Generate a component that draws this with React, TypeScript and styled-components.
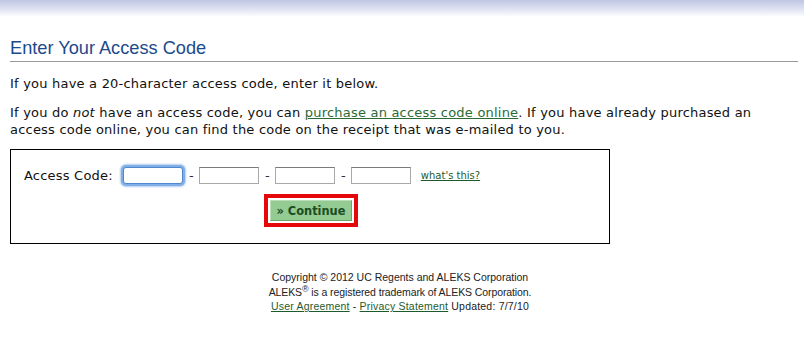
import React from "react";
import styled, { createGlobalStyle } from "styled-components";

const Global = createGlobalStyle`
  html, body { margin: 0; padding: 0; background: #fff; }
  body { font-family: "DejaVu Sans", Verdana, sans-serif; color: #111; }
`;

const TopBand = styled.div`
  height: 17px;
  background: linear-gradient(to bottom, #c0c6e2 0%, #dadef0 45%, #ffffff 100%);
`;

const Main = styled.main`
  padding: 0 6px 0 10px;
`;

const Title = styled.h1`
  margin: 20px 0 0;
  font-family: "Liberation Sans", Arial, sans-serif;
  font-weight: normal;
  font-size: 18.2px;
  line-height: 22px;
  color: #1b4a8c;
  padding-bottom: 2px;
  border-bottom: 1px solid #9a9a9a;
`;

const Para = styled.p<{ $top: number }>`
  margin: ${(p) => p.$top}px 0 0;
  font-size: 13px;
  line-height: 17px;
  letter-spacing: 0.21px;
`;

const TextLink = styled.a`
  color: #2b6b37;
  text-decoration: underline;
`;

const Box = styled.section`
  margin-top: 11px;
  width: 600px;
  box-sizing: border-box;
  border: 1px solid #000;
  padding: 15px 0 16px 13px;
  display: flex;
  flex-direction: column;
  gap: 9px;
`;

const CodeRow = styled.div`
  display: flex;
  align-items: center;
  height: 20px;
  font-size: 13px;
  letter-spacing: 0.21px;
`;

const Label = styled.label`
  margin-right: 10px;
`;

const CodeInput = styled.input<{ $focused?: boolean }>`
  width: 60px;
  height: 17px;
  box-sizing: border-box;
  border: 1px solid ${(p) => (p.$focused ? "#4f86cc" : "#a9a9a9")};
  border-top-color: ${(p) => (p.$focused ? "#4f86cc" : "#7a7a7a")};
  background: #fff;
  padding: 0;
  outline: none;
  box-shadow: ${(p) => (p.$focused ? "0 0 0 2px #80aee6, 0 0 2px 3px #b3cdef" : "none")};
  border-radius: ${(p) => (p.$focused ? "3px" : "0")};
`;

const Dash = styled.span`
  width: 5px;
  margin: 0 5px 0 6px;
  text-align: center;
  color: #333;
`;

const SmallLink = styled.a`
  margin-left: 10px;
  font-size: 10px;
  letter-spacing: 0;
  color: #1e5b2c;
  text-decoration: underline;
`;

const ButtonRow = styled.div`
  display: flex;
  justify-content: center;
  padding-right: 11px;
`;

const Highlight = styled.div`
  border: 4px solid #e4080a;
  padding: 2px;
  background: #fff;
`;

const ContinueButton = styled.button`
  width: 82px;
  height: 21px;
  box-sizing: border-box;
  background: #93cb93;
  border: 1px solid #6fa66f;
  border-top-color: #b9ddb9;
  border-left-color: #b9ddb9;
  color: #1b4d22;
  font-family: "DejaVu Sans", Verdana, sans-serif;
  font-weight: bold;
  font-size: 11.4px;
  padding: 0;
  display: block;
`;

const Footer = styled.footer`
  margin-top: 26px;
  text-align: center;
  font-family: "Liberation Sans", Arial, sans-serif;
  font-size: 10.5px;
  line-height: 14.5px;
  color: #222;
  padding-right: 8px;
`;

const FooterLine = styled.div<{ $spacing?: number }>`
  letter-spacing: ${(p) => p.$spacing ?? 0}px;
`;

const FooterLink = styled.a`
  color: #1e5b2c;
  text-decoration: underline;
`;

const Reg = styled.sup`
  font-size: 9px;
  line-height: 0;
`;

export default function App() {
  return (
    <>
      <Global />
      <TopBand />
      <Main>
        <Title>Enter Your Access Code</Title>
        <Para $top={13}>If you have a 20-character access code, enter it below.</Para>
        <Para $top={12}>
          If you do <em>not</em> have an access code, you can{" "}
          <TextLink href="#">purchase an access code online</TextLink>. If you have already purchased an
          <br />
          access code online, you can find the code on the receipt that was e-mailed to you.
        </Para>
        <Box>
          <CodeRow>
            <Label>Access Code:</Label>
            <CodeInput $focused />
            <Dash>-</Dash>
            <CodeInput />
            <Dash>-</Dash>
            <CodeInput />
            <Dash>-</Dash>
            <CodeInput />
            <SmallLink href="#">what's this?</SmallLink>
          </CodeRow>
          <ButtonRow>
            <Highlight>
              <ContinueButton type="button">» Continue</ContinueButton>
            </Highlight>
          </ButtonRow>
        </Box>
        <Footer>
          <FooterLine>Copyright © 2012 UC Regents and ALEKS Corporation</FooterLine>
          <FooterLine $spacing={-0.1}>
            ALEKS<Reg>®</Reg> is a registered trademark of ALEKS Corporation.
          </FooterLine>
          <FooterLine $spacing={0.2}>
            <FooterLink href="#">User Agreement</FooterLink> - <FooterLink href="#">Privacy Statement</FooterLink> Updated: 7/7/10
          </FooterLine>
        </Footer>
      </Main>
    </>
  );
}
